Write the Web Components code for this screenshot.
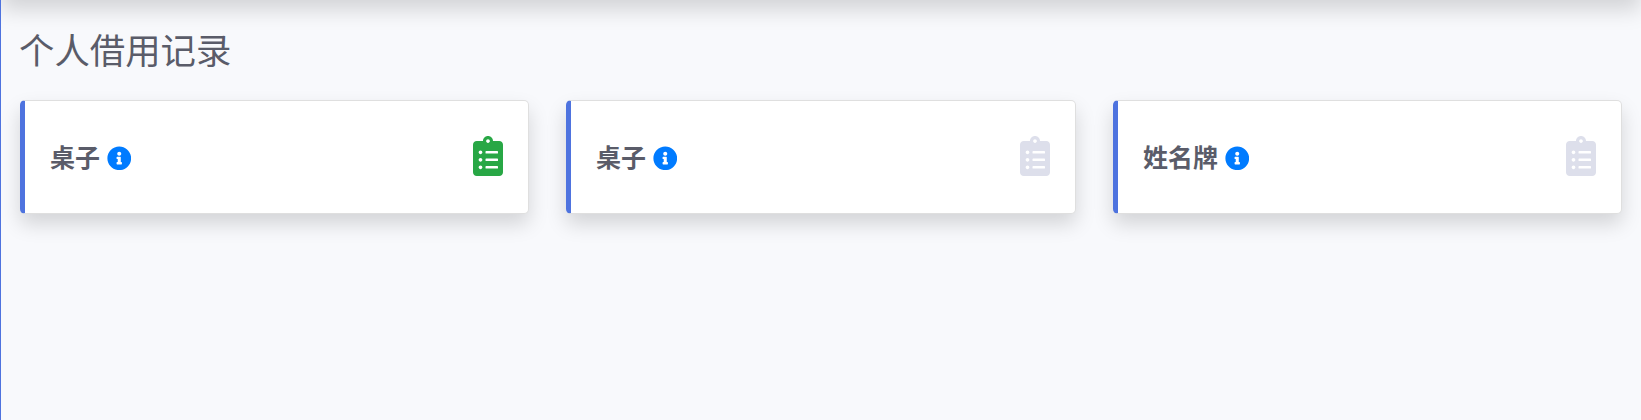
<!DOCTYPE html>
<html lang="zh-CN"><head><meta charset="utf-8"><title>个人借用记录</title>
<style>
html,body{margin:0;height:100%;overflow:hidden;background:#f8f9fc}
body{font-family:"Noto Sans CJK SC",sans-serif;color:#5a5c69}
</style></head><body>
<records-page>
<borrow-card name="桌子" tone="#28a745"></borrow-card>
<borrow-card name="桌子"></borrow-card>
<borrow-card name="姓名牌"></borrow-card>
</records-page>
<template id="page">
<style>
:host{display:flow-root;box-sizing:border-box;height:100vh;border-left:1px solid #4e73df;overflow:hidden}
.bar{height:90px;margin-top:-90px;box-shadow:0 10px 20px rgba(0,0,0,.15)}
main{padding:28px 19px 0}
h1{margin:0 0 30px;font-size:35.4px;line-height:42px;font-weight:400;text-indent:-1px}
.row{display:grid;grid-template-columns:509px 510px 509px;column-gap:37px}
</style>
<div class="bar"></div>
<main><h1>个人借用记录</h1><div class="row"><slot></slot></div></main>
</template>
<template id="card">
<style>
:host{display:flex;box-sizing:border-box;height:114px;align-items:center;justify-content:space-between;padding:0 25px 2px;background:#fff;border:1px solid #dfdfdf;border-left:5px solid #4e73df;border-radius:5px;box-shadow:0 10px 20px rgba(0,0,0,.15)}
.name{display:flex;align-items:center;gap:6.600px;font-size:25px;line-height:30px;font-weight:700}
.info{width:24.5px;height:24.5px;margin-top:4px;fill:#007bff}
.clip{width:30px;height:40px;fill:var(--tone,#dddfeb)}
svg{display:block}
</style>
<div class="name"><span></span><svg class="info" viewBox="0 0 512 512"><path d="M256 8C119.043 8 8 119.083 8 256c0 136.997 111.043 248 248 248s248-111.003 248-248C504 119.083 392.957 8 256 8zm0 110c23.196 0 42 18.804 42 42s-18.804 42-42 42-42-18.804-42-42 18.804-42 42-42zm56 254c0 6.627-5.373 12-12 12h-88c-6.627 0-12-5.373-12-12v-24c0-6.627 5.373-12 12-12h12v-64h-12c-6.627 0-12-5.373-12-12v-24c0-6.627 5.373-12 12-12h64c6.627 0 12 5.373 12 12v100h12c6.627 0 12 5.373 12 12v24z"/></svg></div>
<svg class="clip" viewBox="0 0 384 512"><path d="M336 64h-80c0-35.3-28.7-64-64-64s-64 28.7-64 64H48C21.5 64 0 85.5 0 112v352c0 26.500 21.500 48 48 48h288c26.500 0 48-21.500 48-48V112c0-26.500-21.500-48-48-48zM96 424c-13.300 0-24-10.700-24-24s10.700-24 24-24 24 10.700 24 24-10.700 24-24 24zm0-96c-13.300 0-24-10.700-24-24s10.700-24 24-24 24 10.700 24 24-10.700 24-24 24zm0-96c-13.300 0-24-10.700-24-24s10.700-24 24-24 24 10.700 24 24-10.700 24-24 24zm96-192c13.300 0 24 10.700 24 24s-10.700 24-24 24-24-10.700-24-24 10.700-24 24-24zm128 368c0 4.400-3.600 8-8 8H168c-4.400 0-8-3.600-8-8v-16c0-4.400 3.600-8 8-8h144c4.400 0 8 3.600 8 8v16zm0-96c0 4.400-3.600 8-8 8H168c-4.400 0-8-3.600-8-8v-16c0-4.400 3.600-8 8-8h144c4.400 0 8 3.600 8 8v16zm0-96c0 4.400-3.600 8-8 8H168c-4.400 0-8-3.600-8-8v-16c0-4.400 3.600-8 8-8h144c4.400 0 8 3.600 8 8v16z"/></svg>
</template>
<script>
const stamp=(el,id)=>{const r=el.attachShadow({mode:"open"});r.append(document.getElementById(id).content.cloneNode(true));return r};
customElements.define("records-page",class extends HTMLElement{constructor(){super();stamp(this,"page")}});
customElements.define("borrow-card",class extends HTMLElement{
constructor(){super();stamp(this,"card")}
connectedCallback(){
this.shadowRoot.querySelector("span").textContent=this.getAttribute("name");
const t=this.getAttribute("tone");if(t)this.style.setProperty("--tone",t);
}});
</script>
</body></html>
